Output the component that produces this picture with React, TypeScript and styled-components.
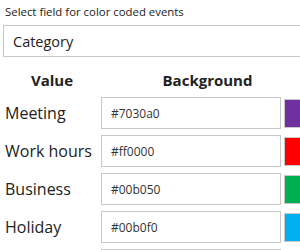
import React from 'react';
import styled, { createGlobalStyle } from 'styled-components';

const GlobalStyle = createGlobalStyle`
  body {
    margin: 0;
    background: #fff;
    overflow: hidden;
    font-family: "Open Sans", "Noto Sans", sans-serif;
    color: #222;
  }
`;

const Panel = styled.div`
  width: 307px;
  padding: 4px 0 0 3px;
`;

const FieldLabel = styled.div`
  font-size: 11.4px;
  line-height: 16px;
  padding-left: 2px;
  color: #222;
`;

const SelectBox = styled.div`
  margin-top: 5px;
  height: 30px;
  border: 1px solid #c8c8c8;
  display: flex;
  align-items: center;
  padding-left: 9px;
  font-size: 14.5px;
  color: #222;
`;

const Table = styled.div`
  display: grid;
  grid-template-columns: 98px 1fr;
  row-gap: 6px;
  margin-top: 13px;
`;

const HeadCell = styled.div`
  text-align: center;
  font-weight: 700;
  font-size: 15px;
  line-height: 20px;
  margin-bottom: 1px;
`;

const ValueLabel = styled.div`
  display: flex;
  align-items: center;
  padding-left: 2px;
  font-size: 16px;
`;

const ColorCell = styled.div`
  display: flex;
  align-items: center;
  gap: 3px;
`;

const HexInput = styled.div`
  box-sizing: border-box;
  width: 180px;
  height: 32px;
  border: 1px solid #c8c8c8;
  display: flex;
  align-items: center;
  padding-left: 9px;
  font-size: 12px;
  color: #333;
`;

const Swatch = styled.div<{ $color: string }>`
  box-sizing: border-box;
  width: 30px;
  height: 29px;
  border: 1px solid #c8c8c8;
  background: ${(p) => p.$color};
`;

const rows = [
  { label: 'Meeting', hex: '#7030a0' },
  { label: 'Work hours', hex: '#ff0000' },
  { label: 'Business', hex: '#00b050' },
  { label: 'Holiday', hex: '#00b0f0' },
  { label: 'Personal', hex: '#ffc000' },
];

export default function App() {
  return (
    <>
      <GlobalStyle />
      <Panel>
        <FieldLabel>Select field for color coded events</FieldLabel>
        <SelectBox>Category</SelectBox>
        <Table>
          <HeadCell>Value</HeadCell>
          <HeadCell>Background</HeadCell>
          {rows.map((r) => (
            <React.Fragment key={r.label}>
              <ValueLabel>{r.label}</ValueLabel>
              <ColorCell>
                <HexInput>{r.hex}</HexInput>
                <Swatch $color={r.hex} />
              </ColorCell>
            </React.Fragment>
          ))}
        </Table>
      </Panel>
    </>
  );
}
